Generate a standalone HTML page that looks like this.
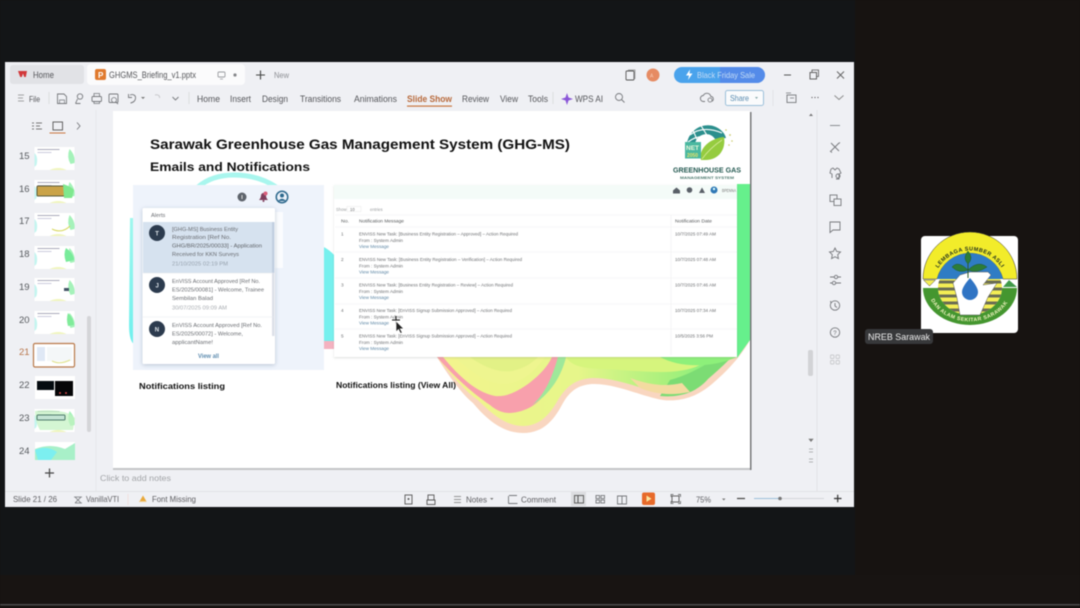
<!DOCTYPE html>
<html><head><meta charset="utf-8"><title>GHG-MS briefing</title>
<style>
html,body{margin:0;padding:0;width:1080px;height:608px;overflow:hidden;background:#171311}
svg{display:block;filter:blur(.4px)}
text{font-family:"Liberation Sans",sans-serif;fill:#555}
.r{font-size:9px;fill:#55565a}
.s{font-size:8.5px;fill:#5f5f63}
.n{font-size:9.5px;fill:#55585c}
.t{font-size:4.7px;fill:#6d6f72}
.l{font-size:4.7px;fill:#5f88a6}
.b{font-weight:bold;fill:#111}
.i{fill:none;stroke:#76787c;stroke-width:.9}
.a{font-size:5.6px;fill:#6a6d72}
.d{font-size:5.2px;fill:#a9adb2}
</style></head><body>
<svg width="1080" height="608" viewBox="0 0 1080 608" xmlns="http://www.w3.org/2000/svg">
<defs>
<linearGradient id="wg" x1="437" y1="0" x2="750" y2="0" gradientUnits="userSpaceOnUse"><stop offset="0" stop-color="#f4f58e"/><stop offset=".45" stop-color="#e6f68a"/><stop offset=".75" stop-color="#a6f07c"/><stop offset="1" stop-color="#6aef80"/></linearGradient>
<linearGradient id="cg" x1="0" y1="0" x2="0" y2="1"><stop offset="0" stop-color="#9ff7ee"/><stop offset="1" stop-color="#6ff0ee"/></linearGradient>
<g id="th"><rect width="40" height="23" fill="#fff"/><path d="M0 6Q4 10 2 18L0 20Z" fill="#c5f5f0"/><path d="M35 2Q41 8 40 16L36 17Q32 10 35 2Z" fill="#a5f2ba"/><rect x="3" y="2" width="22" height="1" fill="#aab"/><rect x="3" y="5" width="14" height="1" fill="#ccd"/><path d="M15 23Q24 19 32 23Z" fill="#f1f6bc"/></g>
<path id="topArc" d="M938.200 268.100A37.500 37.500 0 0 1 1001.800 268.100"/>
<path id="botArc" d="M931 300A42 34 0 0 0 1009 300"/>
<clipPath id="stc"><ellipse cx="970" cy="288" rx="32" ry="27"/></clipPath>
<clipPath id="sl"><rect x="113" y="111" width="637" height="357"/></clipPath>
</defs>
<rect width="1080" height="608" fill="#171311"/>
<rect x="0" y="0" width="855" height="608" fill="#131517"/>
<rect x="0" y="575" width="1080" height="33" fill="#181412"/>
<rect x="0" y="604" width="1080" height="1.5" fill="#4a4a4a"/>

<!-- window -->
<rect x="5" y="62" width="849" height="445" fill="#eff0f4"/>
<!-- tabs -->
<rect x="10" y="65" width="74" height="19" rx="3" fill="#e1e2e6"/>
<rect x="87" y="64" width="158" height="21" rx="4" fill="#fbfbfc"/>
<path d="M18 71h9l-1.200 6h-1.600l-1.200-3.500-1.200 3.500h-1.600z" fill="#d2383a"/>
<text x="33" y="78" class="r" textLength="21" lengthAdjust="spacingAndGlyphs">Home</text>
<rect x="95" y="69" width="11" height="11" rx="2" fill="#e07a2e"/><text x="98" y="78" style="font-size:8px;fill:#fff;font-weight:bold">P</text>
<text x="109" y="78" class="r" textLength="87" lengthAdjust="spacingAndGlyphs">GHGMS_Briefing_v1.pptx</text>
<rect x="218" y="72" width="7" height="5" rx="1" class="i" style="stroke:#9a9ca0"/><path d="M220 79h3" stroke="#9a9ca0" stroke-width=".8"/>
<circle cx="235" cy="75" r="1.600" fill="#85878b"/>
<path d="M256 75h9M260.500 70.500v9" stroke="#444" stroke-width="1.100"/>
<text x="274" y="78" style="font-size:8px;fill:#8d8f94" textLength="15" lengthAdjust="spacingAndGlyphs">New</text>
<rect x="626" y="71" width="8" height="9" rx="1" class="i" style="stroke:#555"/><path d="M628 70h7v9" fill="none" stroke="#888" stroke-width=".7"/>
<circle cx="653" cy="75" r="6.500" fill="#e68b63"/><text x="650" y="77.500" style="font-size:5px;fill:#f8cdb8">A</text>
<rect x="674" y="67" width="91" height="16" rx="8" fill="#4aa3ec"/><path d="M720 67h37a8 8 0 0 1 0 16h-37z" fill="#5d78e8" opacity=".55"/>
<path d="M690 69.500l-4 6h3l-1 4.500 4.500-6.500h-3z" fill="#fff"/>
<text x="697" y="78" style="font-size:8.500px;fill:#c4dcf6" textLength="58" lengthAdjust="spacingAndGlyphs">Black Friday Sale</text>
<path d="M784 75h7" stroke="#555"/><rect x="810" y="72.500" width="6.500" height="6.500" class="i" style="stroke:#555"/><path d="M812 72v-2h6.500v6.500h-2" fill="none" stroke="#555" stroke-width=".8"/>
<path d="M837 71.500l7 7M844 71.500l-7 7" stroke="#666"/>

<!-- ribbon -->
<path d="M18 95h6M18 98h5M18 101h6" stroke="#888" stroke-width=".8"/>
<text x="29" y="102" class="r" style="font-size:8px" textLength="11" lengthAdjust="spacingAndGlyphs">File</text>
<path d="M49 92v12" stroke="#ddd"/>
<path d="M57.500 94h6.500l2.500 2.500v7h-9z" class="i"/><path d="M59.500 100h5v3.500h-5z" class="i" style="stroke-width:.7"/>
<circle cx="80" cy="96.500" r="2.700" class="i"/><path d="M77.500 99l-2 4.500M75.500 103.500h5" class="i"/>
<rect x="92" y="96.500" width="9.500" height="5" rx="1" class="i"/><path d="M94 96v-2.500h5.500V96M94 101v2.500h5.500V101" class="i" style="stroke-width:.8"/>
<rect x="109" y="94" width="9" height="8.500" rx="1" class="i"/><circle cx="114" cy="100" r="2.500" class="i" style="stroke-width:.8"/><path d="M116 102l2 2" class="i"/>
<path d="M130 95c3-1 6 0 5.500 3.500-.4 2.500-2.500 4-5 4.500M128.500 94v3.500h3.500" class="i"/>
<path d="M141 97l2 2 2-2" fill="#777"/>
<path d="M155 95c3-1 5 1 4.500 3" fill="none" stroke="#c8c9cc"/>
<path d="M172.500 97l3 3 3-3" class="i"/>
<path d="M189 92v12" stroke="#ddd"/>
<text x="197" y="102" class="r" textLength="23" lengthAdjust="spacingAndGlyphs">Home</text>
<text x="230" y="102" class="r" textLength="21" lengthAdjust="spacingAndGlyphs">Insert</text>
<text x="262" y="102" class="r" textLength="26" lengthAdjust="spacingAndGlyphs">Design</text>
<text x="300" y="102" class="r" textLength="41" lengthAdjust="spacingAndGlyphs">Transitions</text>
<text x="354" y="102" class="r" textLength="43" lengthAdjust="spacingAndGlyphs">Animations</text>
<text x="407" y="102" class="r" textLength="45" lengthAdjust="spacingAndGlyphs" style="fill:#b86a3c;font-weight:bold">Slide Show</text>
<text x="462" y="102" class="r" textLength="27" lengthAdjust="spacingAndGlyphs">Review</text>
<text x="500" y="102" class="r" textLength="18" lengthAdjust="spacingAndGlyphs">View</text>
<text x="528" y="102" class="r" textLength="20" lengthAdjust="spacingAndGlyphs">Tools</text>
<text x="575" y="102" class="r" textLength="28" lengthAdjust="spacingAndGlyphs">WPS AI</text>
<rect x="407" y="105.500" width="45" height="1.200" fill="#c9753f"/>
<path d="M553 92v12" stroke="#ddd"/>
<path d="M567 93l1.500 4.500 4.500 1.500-4.500 1.500-1.500 4.500-1.500-4.500-4.500-1.500 4.500-1.500z" fill="#8a55d8"/>
<circle cx="619" cy="97" r="3.500" class="i"/><path d="M621.500 99.500l3 3" class="i"/>
<path d="M705 101.500h-1.500a3 3 0 0 1-.2-6 4 4 0 0 1 7.500 1 2.500 2.500 0 0 1 1 4.800" class="i"/>
<circle cx="710" cy="100" r="2" class="i" style="stroke-width:.8"/>
<rect x="725.500" y="90.500" width="38" height="15" rx="2" fill="#fafbfc" stroke="#9cc0da"/>
<text x="730" y="101" style="font-size:8px;fill:#5a8cb0" textLength="19" lengthAdjust="spacingAndGlyphs">Share</text><path d="M755 97h3l-1.500 2z" fill="#8aa"/>
<path d="M773 90v16" stroke="#e2e3e6"/>
<rect x="787" y="95" width="9" height="7.500" class="i"/><path d="M786 93h5M790 98h4" class="i" style="stroke-width:.7"/>
<circle cx="812" cy="97.500" r=".6" fill="#555"/><circle cx="815" cy="97.500" r=".6" fill="#555"/><circle cx="818" cy="97.500" r=".6" fill="#555"/>
<path d="M834.500 95.500l4.500 4 4.500-4" class="i" style="stroke:#888"/>

<!-- left panel -->
<path d="M96 110V491" stroke="#e6e7ea"/>
<path d="M32 123h2M32 126h2M32 129h2M36 123h6M36 126h4M36 129h6" stroke="#777" stroke-width=".9"/>
<rect x="53" y="122" width="9.500" height="8" class="i" style="stroke:#555"/>
<rect x="49.500" y="132.500" width="16" height="1" fill="#c9753f"/>
<path d="M77 122.500l3 3.500-3 3.500" class="i"/>
<text x="19" y="159" class="n">15</text>
<text x="19" y="192" class="n">16</text>
<text x="19" y="224" class="n">17</text>
<text x="19" y="257" class="n">18</text>
<text x="19" y="290" class="n">19</text>
<text x="19" y="323" class="n">20</text>
<text x="19" y="355" class="n" style="fill:#b8754a">21</text>
<text x="19" y="388" class="n">22</text>
<text x="19" y="421" class="n">23</text>
<text x="19" y="454" class="n">24</text>
<use href="#th" x="34.500" y="147"/>
<use href="#th" x="34.500" y="180"/><rect x="37" y="186" width="28" height="10" rx="1" fill="#caa348" stroke="#5a5a3a"/><path d="M63 184q9 3 11 6l-2 8h-8z" fill="#7fe88e"/>
<use href="#th" x="34.500" y="213"/><path d="M52 229q10 5 18-3" stroke="#d7d75a" fill="none"/>
<use href="#th" x="34.500" y="246"/><path d="M66 248q8 6 8 12l-8 2q-3-8 0-14z" fill="#78eb9a"/>
<use href="#th" x="34.500" y="278"/><rect x="64" y="288" width="5" height="3" fill="#456"/>
<use href="#th" x="34.500" y="311"/><path d="M68 313q6 6 6 12l-6 1q-2-7 0-13z" fill="#80eb9a"/>
<rect x="33.500" y="343.500" width="41" height="23.500" rx="1.500" fill="#fff" stroke="#b9794a" stroke-width="1.200"/>
<rect x="37" y="347" width="8" height="14" fill="#dfe8f5"/><rect x="47" y="347" width="25" height="14" fill="#f4f7f8"/><path d="M52 361q8 4 18-1" stroke="#dfe28a" fill="none"/>
<rect x="35" y="376" width="40" height="23" fill="#fff"/><rect x="37" y="381" width="17" height="9" fill="#050b10"/><rect x="55" y="381" width="18" height="15" fill="#060608"/><circle cx="60" cy="393" r="1" fill="#c44"/><circle cx="66" cy="393" r="1" fill="#c44"/>
<use href="#th" x="34.500" y="409"/><path d="M35 411q30-3 40 7l-2 12H40q-5-8-5-19z" fill="#c2f2c0" opacity=".7"/><rect x="37" y="415" width="28" height="5" rx="1" fill="#c4e4d4" stroke="#4d7a6a"/>
<rect x="35" y="442" width="40" height="18" fill="#fff"/><path d="M35 449q15-6 30 0q5-3 10-6v17H35z" fill="#a8f0c8"/><path d="M35 450q12-5 22 2l-6 8H38z" fill="#7ceff0"/>
<rect x="87" y="316" width="4" height="116" rx="2" fill="#d4d5d8"/>
<path d="M45 473h9M49.500 468.500v9" stroke="#444" stroke-width="1.200"/>

<!-- slide -->
<rect x="113" y="113" width="637" height="357" fill="#c4c5c7"/>
<rect x="750" y="112" width="1.500" height="358" fill="#77787a"/>
<rect x="113" y="111" width="637" height="357" fill="#fff"/>
<g clip-path="url(#sl)">
<path d="M198 187Q212 175 234 175Q258 175 276 187" fill="none" stroke="#a9f6ee" stroke-width="5"/>
<path d="M130 218h5v127q-6-3-6-20z" fill="url(#cg)"/>
<path d="M322 246Q330 250 335 256V342H322z" fill="#76f0ee"/>
<rect x="322" y="341" width="12" height="8" fill="#f4b2c0"/>
<!-- wave: rim -->
<path d="M437 350L437 357C450 378 462 394 473 403C483 415 500 433 523 433C545 433 555 418 563 403C570 391 578 385 592 384C615 383 640 396 663 400C680 402 697 397 712 384C725 373 740 358 750 340V300H437Z" fill="#f9d6c0"/>
<!-- wave: main -->
<path d="M437 350V357C452 376 466 392 478 400C490 412 505 426 523 426C540 426 550 414 558 400C566 387 575 379 592 378C615 377 640 389 663 393C680 395 695 390 708 378C722 367 738 352 750 334V300H437Z" fill="url(#wg)"/>
<path d="M660 396C680 398 697 392 708 379C722 367 738 352 750 336L748 330C730 350 700 372 670 380Z" fill="#7cdc74"/>
<path d="M640 388C655 394 670 396 690 392L682 383C665 387 650 385 630 378Z" fill="#f3dba0"/>
<!-- pink -->
<path d="M437 357C455 378 475 395 490 405C497 411 503 413 510 413C525 412 540 405 548 388C553 378 556 368 558 357H552C548 366 540 375 528 384C515 393 505 397 495 396C475 392 458 375 443 357Z" fill="#f8a0ac"/>
<path d="M455 357C470 372 490 385 505 384C525 382 535 370 545 357Z" fill="#eef58f"/>
<path d="M470 357C485 368 500 373 512 371C525 368 532 363 538 357Z" fill="#e2f186"/>
<path d="M558 357H566C562 375 550 395 532 405C545 395 553 375 558 357Z" fill="#9fe89a"/>
<path d="M566 357C574 370 592 368 620 370C650 372 680 375 700 365C715 358 725 357 737 357Z" fill="#d6f57d"/>
<path d="M660 357C680 368 712 368 737 357Z" fill="#8df07a"/>
<path d="M737 184H750V340L737 358Z" fill="#66f08c"/>
</g>
<text x="150" y="149" class="b" style="font-size:14px;fill:#111" textLength="420" lengthAdjust="spacingAndGlyphs">Sarawak Greenhouse Gas Management System (GHG-MS)</text>
<text x="150" y="171" class="b" style="font-size:12px;fill:#111" textLength="160" lengthAdjust="spacingAndGlyphs">Emails and Notifications</text>
<text x="139" y="389" class="b" style="font-size:8px;fill:#111" textLength="86" lengthAdjust="spacingAndGlyphs">Notifications listing</text>
<text x="336" y="388" class="b" style="font-size:8px;fill:#111" textLength="120" lengthAdjust="spacingAndGlyphs">Notifications listing (View All)</text>

<!-- ghg logo -->
<path d="M687 143C690 128 705 122 716 127C722 130 725 134 726 138L715 139C710 131 698 133 695 143Z" fill="#2b8f8d"/>
<path d="M692 128L705 158M700 124L713 145M690 135Q703 125 722 133M688 142Q700 133 713 139" stroke="#fff" stroke-width="1.100" fill="none"/>
<path d="M701 160C698 148 711 138 724 137C726 148 720 160 705 160Z" fill="#95cc3f"/>
<path d="M702 159Q710 148 722 140" stroke="#d5ea9a" stroke-width=".8" fill="none"/>
<rect x="685" y="142" width="16" height="16.500" fill="#4ab8a0"/>
<text x="686" y="150" style="font-size:6.500px;fill:#eaf7da;font-weight:bold" textLength="13" lengthAdjust="spacingAndGlyphs">NET</text>
<text x="687" y="157" style="font-size:5px;fill:#e6e36a;font-weight:bold" textLength="11" lengthAdjust="spacingAndGlyphs">2050</text>
<circle cx="726" cy="130" r=".8" fill="#c9c96a"/><circle cx="730" cy="135" r=".9" fill="#c9c96a"/><circle cx="732" cy="141" r=".8" fill="#c9c96a"/><circle cx="729" cy="145" r=".8" fill="#c9c96a"/>
<text x="673" y="172.500" style="font-size:7px;font-weight:bold;fill:#255a52" textLength="68" lengthAdjust="spacingAndGlyphs">GREENHOUSE GAS</text>
<text x="680" y="179" style="font-size:3.800px;font-weight:bold;fill:#4f7b70" textLength="54" lengthAdjust="spacingAndGlyphs">MANAGEMENT SYSTEM</text>

<!-- alerts -->
<rect x="133" y="185" width="191" height="185" fill="#eef3fb"/>
<rect x="275" y="212" width="8" height="56" fill="#fbfcfe"/>
<circle cx="242" cy="197" r="4.500" fill="#5e646c"/><rect x="241.500" y="195" width="1" height="4" fill="#ddd"/>
<path d="M259 200q2-2 2-4.500a2.500 2.500 0 0 1 5 0q0 2.500 2 4.500z" fill="#7e3e5c"/><circle cx="263.500" cy="201" r="1" fill="#7e3e5c"/><circle cx="265.500" cy="193.500" r="2" fill="#d95c7a"/>
<circle cx="282" cy="197" r="6.500" fill="#2f6a8e"/><circle cx="282" cy="197" r="5" fill="#eef3fb"/><circle cx="282" cy="195.500" r="2" fill="#2f6a8e"/><path d="M278 201q4-4.500 8 0" fill="#2f6a8e"/>
<rect x="142.500" y="208" width="132.500" height="156" rx="1.500" fill="#fff" style="filter:drop-shadow(0 1px 2px rgba(90,110,140,.35))"/>
<text x="151" y="217" class="a">Alerts</text>
<rect x="143" y="222" width="131" height="51" fill="#d6e2ef"/>
<rect x="272" y="222" width="2.500" height="114" fill="#dde0e8"/><rect x="272" y="222" width="2.500" height="51" fill="#c2cfe0"/>
<circle cx="157" cy="233" r="8" fill="#2c3b4e"/><text x="155.300" y="235.500" style="font-size:6px;font-weight:bold;fill:#dfe5ea">T</text>
<text x="172" y="231" class="a" textLength="66" lengthAdjust="spacingAndGlyphs">[GHG-MS] Business Entity</text>
<text x="172" y="239" class="a" textLength="59" lengthAdjust="spacingAndGlyphs">Registration [Ref No.</text>
<text x="172" y="247.500" class="a" textLength="90" lengthAdjust="spacingAndGlyphs" style="fill:#5f6368">GHG/BR/2025/00033] - Application</text>
<text x="172" y="256" class="a" textLength="67" lengthAdjust="spacingAndGlyphs">Received for KKN Surveys</text>
<text x="172" y="265.500" class="d" textLength="56" lengthAdjust="spacingAndGlyphs" style="fill:#97a2ae">21/10/2025 02:19 PM</text>
<path d="M143 273h131M143 317h131" stroke="#e6e8ee" stroke-width=".6"/>
<circle cx="157" cy="285" r="8" fill="#2c3b4e"/><text x="155.500" y="287.500" style="font-size:6px;font-weight:bold;fill:#dfe5ea">J</text>
<text x="172" y="283" class="a" textLength="88" lengthAdjust="spacingAndGlyphs">EnVISS Account Approved [Ref No.</text>
<text x="172" y="291.500" class="a" textLength="92" lengthAdjust="spacingAndGlyphs">ES/2025/00081] - Welcome, Trainee</text>
<text x="172" y="300" class="a" textLength="41" lengthAdjust="spacingAndGlyphs">Sembilan Balad</text>
<text x="172" y="309.500" class="d" textLength="55" lengthAdjust="spacingAndGlyphs">30/07/2025 09:09 AM</text>
<circle cx="157" cy="329" r="8" fill="#2c3b4e"/><text x="154.800" y="331.500" style="font-size:6px;font-weight:bold;fill:#dfe5ea">N</text>
<text x="172" y="327" class="a" textLength="90" lengthAdjust="spacingAndGlyphs">EnVISS Account Approved [Ref No.</text>
<text x="172" y="335.500" class="a" textLength="71" lengthAdjust="spacingAndGlyphs">ES/2025/00072] - Welcome,</text>
<text x="172" y="344" class="a" textLength="41" lengthAdjust="spacingAndGlyphs">applicantName!</text>
<rect x="143" y="348" width="131" height="16" fill="#fff"/>
<text x="198" y="358" style="font-size:6.500px;fill:#5f8db0;font-weight:bold" textLength="21" lengthAdjust="spacingAndGlyphs">View all</text>

<!-- table -->
<rect x="334" y="185" width="403" height="172" fill="#fff" style="filter:drop-shadow(0 1px 1px rgba(120,130,120,.25))"/>
<rect x="334" y="185" width="403" height="14" fill="#f4fbf8"/>
<path d="M673 190.500l3.500-3 3.500 3v3h-7z" fill="#5a6068"/><circle cx="689.500" cy="190" r="2.800" fill="#5a6068"/><path d="M699 193l3-5.500 3 5.500z" fill="#5a6068"/>
<circle cx="714" cy="190" r="3.500" fill="#2f78b5"/><circle cx="714" cy="189" r="1.200" fill="#dff"/>
<text x="722" y="192" style="font-size:4.200px;fill:#777" textLength="14" lengthAdjust="spacingAndGlyphs">BPENNA</text>
<text x="336" y="211" class="t" style="font-size:4.200px;fill:#9a9d9f">Show</text><rect x="347" y="206.500" width="14" height="5" fill="#fff" stroke="#e8e8e8" stroke-width=".5"/><text x="350" y="211" class="t" style="font-size:4.200px">10</text><text x="370" y="211" class="t" style="font-size:4.200px;fill:#9a9d9f">entries</text>
<path d="M335 215H737M335 227H737M335 252H737M335 278H737M335 304H737M335 329H737" stroke="#f0f0f2" stroke-width=".6"/>
<path d="M671 215V355" stroke="#eeeef0" stroke-width=".6"/>
<text x="341" y="222.500" class="t" style="fill:#55585a" textLength="8" lengthAdjust="spacingAndGlyphs">No.</text>
<text x="359" y="222.500" class="t" style="fill:#55585a" textLength="45" lengthAdjust="spacingAndGlyphs">Notification Message</text>
<text x="675" y="222.500" class="t" style="fill:#55585a" textLength="37" lengthAdjust="spacingAndGlyphs">Notification Date</text>

<text x="341" y="235.500" class="t">1</text>
<text x="359" y="235.500" class="t" textLength="159" lengthAdjust="spacingAndGlyphs">ENVISS New Task: [Business Entity Registration – Approved] – Action Required</text>
<text x="359" y="242" class="t" textLength="44" lengthAdjust="spacingAndGlyphs">From : System Admin</text>
<text x="359" y="248" class="l" textLength="30" lengthAdjust="spacingAndGlyphs">View Message</text>
<text x="675" y="235.500" class="t" textLength="41" lengthAdjust="spacingAndGlyphs">10/7/2025 07:49 AM</text>

<text x="341" y="261" class="t">2</text>
<text x="359" y="261" class="t" textLength="163" lengthAdjust="spacingAndGlyphs">ENVISS New Task: [Business Entity Registration – Verification] – Action Required</text>
<text x="359" y="267.500" class="t" textLength="44" lengthAdjust="spacingAndGlyphs">From : System Admin</text>
<text x="359" y="273.500" class="l" textLength="30" lengthAdjust="spacingAndGlyphs">View Message</text>
<text x="675" y="261" class="t" textLength="41" lengthAdjust="spacingAndGlyphs">10/7/2025 07:48 AM</text>

<text x="341" y="286.500" class="t">3</text>
<text x="359" y="286.500" class="t" textLength="154" lengthAdjust="spacingAndGlyphs">ENVISS New Task: [Business Entity Registration – Review] – Action Required</text>
<text x="359" y="293" class="t" textLength="44" lengthAdjust="spacingAndGlyphs">From : System Admin</text>
<text x="359" y="299" class="l" textLength="30" lengthAdjust="spacingAndGlyphs">View Message</text>
<text x="675" y="286.500" class="t" textLength="41" lengthAdjust="spacingAndGlyphs">10/7/2025 07:46 AM</text>

<text x="341" y="312" class="t">4</text>
<text x="359" y="312" class="t" textLength="153" lengthAdjust="spacingAndGlyphs">ENVISS New Task: [EnVISS Signup Submission Approved] – Action Required</text>
<text x="359" y="318.500" class="t" textLength="44" lengthAdjust="spacingAndGlyphs">From : System Admin</text>
<text x="359" y="324.500" class="l" textLength="30" lengthAdjust="spacingAndGlyphs">View Message</text>
<text x="675" y="312" class="t" textLength="41" lengthAdjust="spacingAndGlyphs">10/7/2025 07:34 AM</text>

<text x="341" y="337.500" class="t">5</text>
<text x="359" y="337.500" class="t" textLength="153" lengthAdjust="spacingAndGlyphs">ENVISS New Task: [EnVISS Signup Submission Approved] – Action Required</text>
<text x="359" y="344" class="t" textLength="44" lengthAdjust="spacingAndGlyphs">From : System Admin</text>
<text x="359" y="350" class="l" textLength="30" lengthAdjust="spacingAndGlyphs">View Message</text>
<text x="675" y="337.500" class="t" textLength="38" lengthAdjust="spacingAndGlyphs">10/5/2025 3:56 PM</text>

<!-- cursor -->
<path d="M396 316v8M392 320h8" stroke="#111" stroke-width="1"/>
<path d="M396 321l0 11 2.500-2.500 2 4 1.800-.8-2-3.900h3.500z" fill="#222" stroke="#fff" stroke-width=".7"/>

<!-- right tools -->
<path d="M817 110V491" stroke="#e2e3e7"/>
<rect x="808" y="350" width="5" height="26" rx="2" fill="#d2d3d6"/>
<path d="M809 116l2-2.500 2 2.500z" fill="#777"/><path d="M809 439h4l-2 2.500zM809 449h4M809 452h4M809 459h4M809 462h4" fill="#777" stroke="#777" stroke-width=".6"/>
<path d="M830 125.500h10" stroke="#8a8c90" stroke-width="1"/>
<path d="M831 143l8 8M839 143l-8 8M830 151l2 1.500M840 142.500l-2 1.500" class="i"/>
<path d="M831 169l2-1 2 2 2-2 2 1 2 4-2 1v5h-3M831 169l-1 4 2 1v4" class="i"/><circle cx="838" cy="176" r="2" class="i"/>
<rect x="830" y="195" width="7" height="6.500" class="i"/><rect x="834" y="199" width="7" height="6.500" class="i" style="fill:#eff0f4"/>
<path d="M830 222h10v8h-7l-3 2.500z" class="i"/>
<path d="M835 248l1.700 3.500 3.800.5-2.800 2.700.7 3.800-3.400-1.800-3.400 1.800.7-3.800-2.800-2.700 3.800-.5z" class="i"/>
<path d="M830 277h4M838 277h3M830 283h2M836 283h5" class="i"/><circle cx="836" cy="277" r="1.700" class="i"/><circle cx="834" cy="283" r="1.700" class="i"/>
<circle cx="835" cy="305.500" r="4.700" class="i"/><path d="M835 303v3l2 1.500M830.500 301l.5 2" class="i"/>
<circle cx="835" cy="332.500" r="4.700" class="i"/><text x="833.300" y="335" style="font-size:6px;fill:#66686c">?</text>
<g fill="none" stroke="#c9cacd" stroke-width=".9"><rect x="830.500" y="355" width="3.500" height="3.500" rx="1"/><rect x="836" y="355" width="3.500" height="3.500" rx="1"/><rect x="830.500" y="360.500" width="3.500" height="3.500" rx="1"/><rect x="836" y="360.500" width="3.500" height="3.500" rx="1"/></g>

<!-- notes and status -->
<text x="100" y="481" style="font-size:8.500px;fill:#a3a5a8" textLength="71" lengthAdjust="spacingAndGlyphs">Click to add notes</text>
<path d="M5 491.500H854" stroke="#e2e3e6"/>
<text x="13" y="502" class="s" textLength="44" lengthAdjust="spacingAndGlyphs">Slide 21 / 26</text>
<path d="M74 497h8M75 503h7M75 497l6 6M81 497l-6 6" class="i" style="stroke-width:.8"/>
<text x="86" y="502" class="s" textLength="33" lengthAdjust="spacingAndGlyphs">VanillaVTI</text>
<path d="M128 494v11" stroke="#f0e0e0"/>
<path d="M143 495.500l3.500 6h-7z" fill="#e8a83a"/><path d="M139 501.500h7.500" stroke="#f2cf90"/>
<text x="152" y="502" class="s" textLength="44" lengthAdjust="spacingAndGlyphs">Font Missing</text>
<rect x="405" y="495" width="7" height="9" class="i" style="stroke:#555"/><circle cx="408.500" cy="499" r="1" fill="#555"/>
<rect x="428" y="495" width="6" height="5" class="i" style="stroke:#555"/><rect x="427" y="500" width="8" height="4.500" class="i" style="stroke:#555"/>
<path d="M454 496.500h7M454 499.500h7M454 502.500h7" class="i" style="stroke:#777;stroke-width:.8"/>
<text x="466" y="502.500" class="s" textLength="21" lengthAdjust="spacingAndGlyphs">Notes</text><path d="M490 498h3.500l-1.700 2z" fill="#777"/>
<path d="M509 495.500h8M508.500 503.500V496M517.500 503.500h-6l-3 0" class="i"/>
<text x="521" y="502.500" class="s" textLength="35" lengthAdjust="spacingAndGlyphs">Comment</text>
<rect x="571" y="492" width="15" height="14" fill="#dcdde0"/>
<rect x="574.500" y="495.500" width="9" height="7.500" class="i" style="stroke:#555"/><path d="M578 495.500v7.500" stroke="#555"/>
<rect x="596" y="495.500" width="3.500" height="3" class="i"/><rect x="601" y="495.500" width="3.500" height="3" class="i"/><rect x="596" y="500" width="3.500" height="3" class="i"/><rect x="601" y="500" width="3.500" height="3" class="i"/>
<path d="M617.500 496h4.500v8h-4.500zM622 496h4.500v8H622" class="i"/>
<rect x="642" y="492.500" width="13" height="12.500" rx="2" fill="#e76a2a"/><path d="M646.500 495.500l5 3.200-5 3.200z" fill="#fbe6a0"/>
<rect x="672" y="496" width="7" height="6" class="i" style="stroke:#555"/><path d="M671 497v-2.500h2.500M678 494.500h2.500V497M680.500 501v2.500H678M673.500 503.500H671V501" class="i" style="stroke:#555;stroke-width:.7"/>
<text x="696" y="502.500" class="s" textLength="15" lengthAdjust="spacingAndGlyphs">75%</text>
<path d="M722 498.500h3.500l-1.700 2z" fill="#777"/>
<path d="M737 498.500h8" stroke="#444" stroke-width="1.200"/>
<path d="M754 498.500h25" stroke="#9cc0da" stroke-width="1"/><path d="M780 498.500h44" stroke="#d4d6da" stroke-width="1"/><circle cx="780" cy="498.500" r="1.800" fill="#777"/>
<path d="M834 498.500h7.500M837.700 494.700v7.600" stroke="#333" stroke-width="1.200"/>

<!-- participant tile -->
<rect x="921" y="236" width="97" height="97" rx="4" fill="#fff"/>
<path d="M923 279A47 47 0 0 1 1017 279H1003A34 34 0 0 0 937 279Z" fill="#f2ec2a" stroke="#333" stroke-width=".5"/>
<path d="M937 279A34 34 0 0 1 1003 279Z" fill="#2f7cc4"/>
<g clip-path="url(#stc)"><rect x="937" y="279" width="66" height="36" fill="#f4ee54"/>
<path d="M937 282h66M937 289h66M937 296h66M937 303h66M937 310h66" stroke="#6b6d54" stroke-width="3"/></g>
<path d="M923.500 280h12l-6 6z" fill="#f4ee54" stroke="#444" stroke-width=".5"/>
<path d="M1003 287l6-7 8 7z" fill="#3f9a48"/>
<path d="M923 288H938A32 27 0 0 0 1002 288H1017A47 37 0 0 1 923 288Z" fill="#44962f"/>
<path d="M953 283L960 275L970 272L988 272L991 275L983 285L997 283L988 297L980 315H960L957 298Z" fill="#fff" stroke="#555" stroke-width=".5"/>
<path d="M970 278Q978 287 978 292A8 8 0 0 1 962 292Q962 287 970 278Z" fill="#2f74c4"/>
<path d="M968 278V255" stroke="#2e5a2a"/>
<path d="M968 270Q958 260 952 267Q959 274 968 270ZM968 270Q978 260 987 267Q977 274 968 270ZM968 264Q962 258 968 251Q974 258 968 264Z" fill="#2c7d37" stroke="#1e4e24" stroke-width=".4"/>
<text style="font-size:5.500px;font-weight:bold;fill:#1f2f1f"><textPath href="#topArc" textLength="75" lengthAdjust="spacing">LEMBAGA SUMBER ASLI</textPath></text>
<text style="font-size:5.200px;font-weight:bold;fill:#f1f3c0"><textPath href="#botArc" textLength="90" lengthAdjust="spacing">DAN ALAM SEKITAR SARAWAK</textPath></text>
<rect x="865" y="329" width="68" height="15" rx="3" fill="#37383a"/>
<text x="868" y="340" style="font-size:9.500px;fill:#eeeeee" textLength="62" lengthAdjust="spacingAndGlyphs">NREB Sarawak</text>
</svg>
</body></html>
